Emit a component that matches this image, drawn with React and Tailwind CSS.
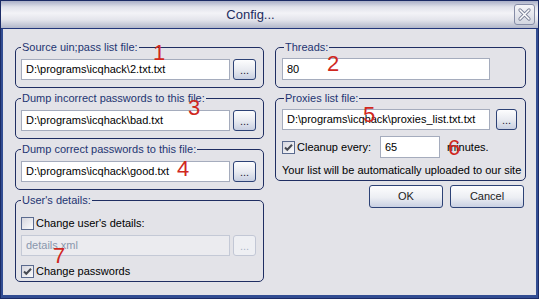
import React from 'react'

function Check({ checked }) {
  return (
    <span className="w-[13px] h-[13px] shrink-0 border border-[#5a6a8e] bg-[linear-gradient(135deg,#d6d6de,#fbfbfc)] flex items-center justify-center">
      {checked && (
        <svg width={11} height={11} viewBox="0 0 11 11">
          <path d="M2 5.5 L4.3 7.8 L9 2.8" fill="none" stroke="#474a52" strokeWidth={2} />
        </svg>
      )}
    </span>
  )
}

function Field({ value, w, h = 'h-[21px]', disabled }) {
  return (
    <div
      className={`${w} ${h} shrink-0 border flex items-center pl-[4px] ${
        disabled ? 'border-[#c4c9d6] bg-[#ebebef] text-[#8a97ad]' : 'border-[#a5acbd] bg-white text-black'
      }`}
    >
      {value}
    </div>
  )
}

function Browse({ w = 'w-[23px]', disabled }) {
  return (
    <button
      className={`${w} h-[21px] shrink-0 rounded-[3px] border flex items-end justify-center pb-[3px] leading-none ${
        disabled
          ? 'border-[#c2c7d5] bg-[#eeeff3] text-[#aab3c6]'
          : 'border-[#2d4276] bg-[linear-gradient(to_bottom,#fdfdfe,#e9ebf1_50%,#c8cfe1)] text-[#1f2233]'
      }`}
    >
      ...
    </button>
  )
}

function Group({ label, className, legend = 'ml-0', children }) {
  return (
    <fieldset className={`border border-[#1f2e62] rounded-[5px] ${className}`}>
      <legend className={`${legend} px-[1px] leading-[13px] text-[#1e3572]`}>{label}</legend>
      {children}
    </fieldset>
  )
}

function Btn({ children }) {
  return (
    <button className="w-[74px] h-[23px] rounded-[3px] border border-[#2d4276] bg-[linear-gradient(to_bottom,#fdfdfe,#eceef3_55%,#c9d0e2)] text-[#222]">
      {children}
    </button>
  )
}

const marks = [
  { n: '1', c: 'left-[152px] top-[41px]' },
  { n: '2', c: 'left-[326px] top-[52px]' },
  { n: '3', c: 'left-[187px] top-[96px]' },
  { n: '4', c: 'left-[176px] top-[157px]' },
  { n: '5', c: 'left-[362px] top-[103px]' },
  { n: '6', c: 'left-[447px] top-[136px]' },
  { n: '7', c: 'left-[52px] top-[244px]' },
]

export default function App() {
  return (
    <div className="relative w-[539px] h-[299px] flex flex-col border border-[#1b2b66] bg-[#324d92] font-['Liberation_Sans',Arial,sans-serif] text-[11px] leading-[13px] overflow-hidden">
      {/* Title bar */}
      <div className="h-[28px] shrink-0 flex items-center border-b border-[#22367a] bg-[linear-gradient(to_bottom,#a9afc7_0%,#dfe1ea_22%,#f3f3f7_45%,#e3e4eb_70%,#b2b7ca_100%)]">
        <div className="flex-1 flex justify-center pr-[14px] text-[13px] text-[#1d2d5f]">Config...</div>
        <button className="w-[21px] h-[21px] mr-[3px] rounded-[3px] border border-[#858ca6] bg-[linear-gradient(to_bottom,#f6f6f9,#d3d6e1)] flex items-center justify-center">
          <svg width={15} height={15} viewBox="0 0 15 15">
            <path d="M3 3 L12 12 M12 3 L3 12" stroke="#7b8299" strokeWidth={3.2} strokeLinecap="round" />
            <path d="M3 3 L12 12 M12 3 L3 12" stroke="#ffffff" strokeWidth={1.5} strokeLinecap="round" />
          </svg>
        </button>
      </div>

      {/* Body */}
      <div className="flex-1 mx-[2px] mb-[3px] bg-[#e3e3e8] pt-[12px] pl-[12px] flex gap-[11px]">
        {/* Left column */}
        <div className="w-[249px] flex flex-col gap-[4px]">
          <Group label="Source uin;pass list file:" className="pt-[5px] pb-[7px] pl-[5px]">
            <div className="flex gap-[3px]">
              <Field w="w-[209px]" value="D:\programs\icqhack\2.txt.txt" />
              <Browse />
            </div>
          </Group>
          <Group label="Dump incorrect passwords to this file:" className="pt-[5px] pb-[7px] pl-[5px]">
            <div className="flex gap-[3px]">
              <Field w="w-[209px]" value="D:\programs\icqhack\bad.txt" />
              <Browse />
            </div>
          </Group>
          <Group label="Dump correct passwords to this file:" className="pt-[5px] pb-[7px] pl-[5px]">
            <div className="flex gap-[3px]">
              <Field w="w-[209px]" value="D:\programs\icqhack\good.txt" />
              <Browse />
            </div>
          </Group>
          <Group label="User's details:" className="pt-[9px] pb-[3px] pl-[5px]">
            <div className="h-[14px] flex items-center gap-[2px]">
              <Check />
              <span className="text-black">Change user's details:</span>
            </div>
            <div className="flex gap-[3px] mt-[5px]">
              <Field w="w-[209px]" value="details.xml" disabled />
              <Browse disabled />
            </div>
            <div className="h-[14px] flex items-center gap-[2px] mt-[8px]">
              <Check checked />
              <span className="text-black">Change passwords</span>
            </div>
          </Group>
        </div>

        {/* Right column */}
        <div className="w-[251px] flex flex-col">
          <Group label="Threads:" legend="ml-[2px]" className="pt-[4px] pb-[7px] pl-[6px]">
            <Field w="w-[208px]" h="h-[22px]" value="80" />
          </Group>
          <Group label="Proxies list file:" legend="ml-[2px]" className="mt-[4px] pt-[4px] pb-[3px] pl-[6px]">
            <div className="flex gap-[6px]">
              <Field w="w-[208px]" value="D:\programs\icqhack\proxies_list.txt.txt" />
              <Browse w="w-[21px]" />
            </div>
            <div className="flex items-center mt-[6px]">
              <Check checked />
              <span className="w-[83px] ml-[2px] text-black">Cleanup every:</span>
              <Field w="w-[60px]" h="h-[22px]" value="65" />
              <span className="ml-[7px] text-black">minutes.</span>
            </div>
            <div className="mt-[6px] text-black">Your list will be automatically uploaded to our site</div>
          </Group>
          <div className="flex justify-end gap-[7px] pr-[2px] mt-[4px]">
            <Btn>OK</Btn>
            <Btn>Cancel</Btn>
          </div>
        </div>
      </div>

      {/* Red annotation numbers */}
      {marks.map(m => (
        <span key={m.n} className={`absolute ${m.c} text-[22px] leading-[22px] text-[#d0281e]`}>
          {m.n}
        </span>
      ))}
    </div>
  )
}
